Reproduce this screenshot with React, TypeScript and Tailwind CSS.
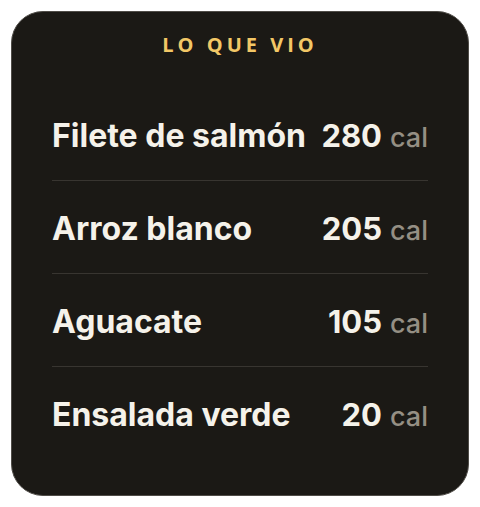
const items = [
  { name: 'Filete de salmón', cal: 280 },
  { name: 'Arroz blanco', cal: 205 },
  { name: 'Aguacate', cal: 105 },
  { name: 'Ensalada verde', cal: 20 },
];

export default function App() {
  return (
    <div className="w-[480px] h-[507px] bg-white pt-[11px] pl-[11px]">
      <div className="w-[458px] h-[485px] rounded-[32px] bg-[#1b1915] border border-[#4f4c47] px-[40px] flex flex-col">
        {/* Title */}
        <div className="pt-[21px] h-[56px] text-center font-['Open_Sans',sans-serif] text-[20px] leading-[24px] font-bold tracking-[0.2em] text-[#f2c766]">
          LO QUE VIO
        </div>

        <div className="mt-[20px] flex flex-col">
          {items.map((item, i) => (
            <div
              key={item.name}
              className={`h-[92px] flex items-center justify-between font-['Inter',sans-serif] ${
                i < items.length - 1 ? 'box-content border-b border-[#383530]' : ''
              }`}
            >
              <span className="mt-[4px] text-[32px] font-bold text-[#f5f2ea]">{item.name}</span>
              <span className="mt-[4px] flex items-baseline gap-[8px]">
                <span className="text-[31px] font-bold text-[#f5f2ea]">{item.cal}</span>
                <span className="text-[27px] font-medium text-[#958f84]">cal</span>
              </span>
            </div>
          ))}
        </div>
      </div>
    </div>
  );
}
